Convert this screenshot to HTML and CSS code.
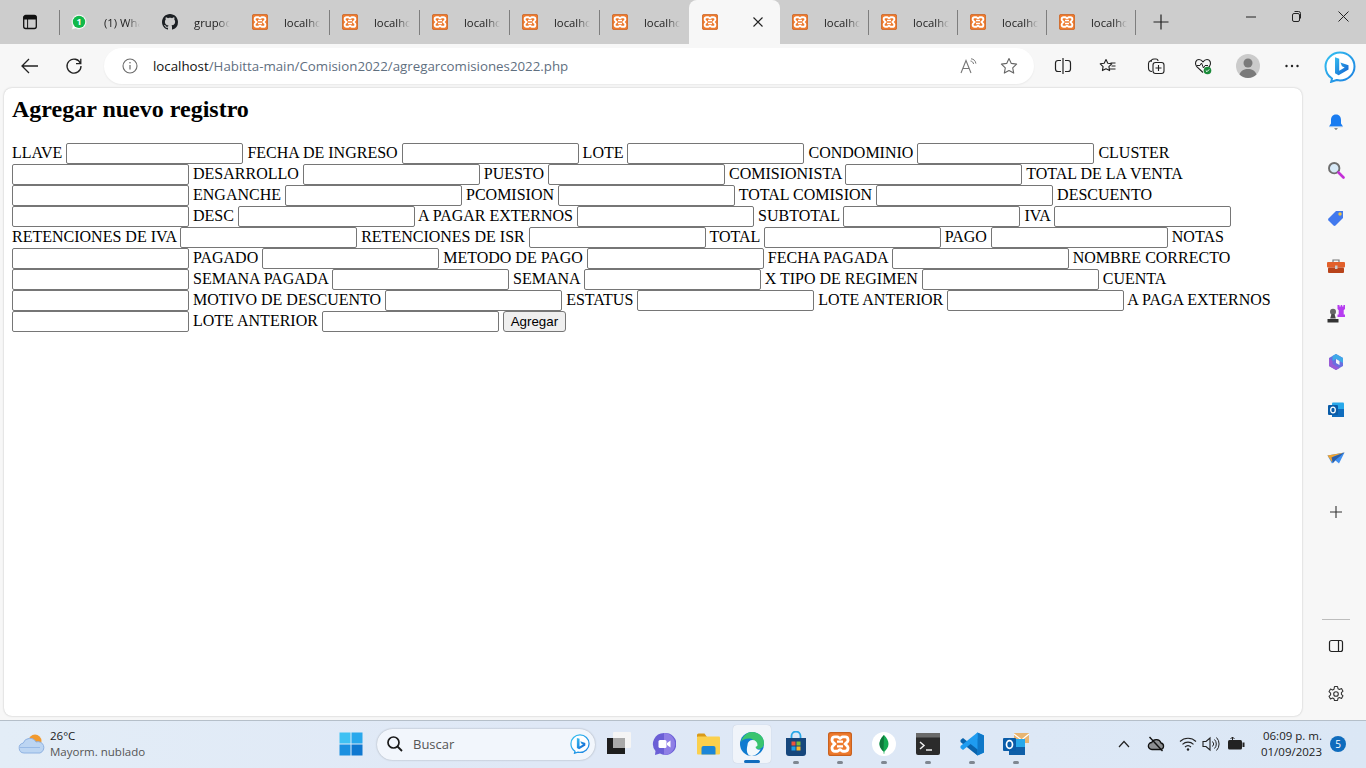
FILE: index.html
```html
<!DOCTYPE html>
<html lang="es">
<head>
<meta charset="utf-8">
<title>Agregar nuevo registro</title>
<link rel="stylesheet" href="styles.css">
</head>
<body>
<svg class="defs" width="0" height="0" aria-hidden="true">
  <defs>
    <symbol id="xampp" viewBox="0 0 16 16">
      <rect x=".4" y=".4" width="15.200" height="15.200" rx="1.500" fill="#ee7a2d" stroke="#c9611f" stroke-width=".8"/>
      <path d="M4.600 3.200h1.600c.9 0 1.200 1.100 1.800 1.100s.9-1.100 1.800-1.100h1.600c1.200 0 1.900.8 1.900 1.900v.5c0 1.200-1.300 1.600-1.900 2.400.6.800 1.900 1.200 1.900 2.400v.5c0 1.100-.7 1.900-1.900 1.900H9.800c-.9 0-1.200-1.100-1.800-1.100s-.9 1.100-1.800 1.100H4.600c-1.200 0-1.900-.8-1.900-1.900v-.5C2.700 9.200 4 8.800 4.600 8 4 7.200 2.700 6.800 2.700 5.600v-.5c0-1.100.7-1.900 1.900-1.900Z" fill="none" stroke="#fff" stroke-width="1.900"/>
      <path d="M6 6.400h4M6 9.600h4" stroke="#fff" stroke-width="1.500"/>
    </symbol>
    <symbol id="bing" viewBox="0 0 32 32">
      <path d="M16 1.500C8 1.500 1.500 8 1.500 15.500c0 5.500 2.700 9.500 6.500 12l-.8 3.300 5.300-1.800c1 .2 2.300.5 3.500.5 7.500 0 14.500-6 14.500-14S24 1.500 16 1.500Z" fill="#fff" stroke="url(#bingedge)" stroke-width="2"/>
      <path d="M11 6.200l4.200 1.500v12.100l5.500-3.200-2.700-1.300-1.600-3.900 8.100 2.800v4.300l-9.900 5.800L11 22.200Z" fill="url(#bingfill)"/>
    </symbol>
    <linearGradient id="bingedge" x1="0" y1="0" x2="1" y2="1"><stop offset="0" stop-color="#35c1f1"/><stop offset="1" stop-color="#1b7fe0"/></linearGradient>
    <linearGradient id="bingfill" x1="0" y1="0" x2="1" y2="1"><stop offset="0" stop-color="#37bdf0"/><stop offset="1" stop-color="#0f5fd0"/></linearGradient>
  </defs>
</svg>
<div class="app">
  <header class="tabstrip">
    <div class="winbtn">
      <svg width="16" height="16" viewBox="0 0 16 16"><rect x="1.700" y="1.500" width="12.600" height="13" rx="2" fill="none" stroke="#111" stroke-width="1.300"/><path d="M2 2.500h12v2.500H2zM5.600 5v9" fill="#111" stroke="#111" stroke-width="1"/></svg>
    </div>
    <div class="tab first noline">
      <svg class="fav" width="16" height="16" viewBox="0 0 16 16"><path d="M8 .5a7.400 7.400 0 0 0-6.300 11.200L.7 15.500l3.900-1A7.400 7.400 0 1 0 8 .5Z" fill="#fff" stroke="#d5d5d5" stroke-width=".6"/><circle cx="8" cy="7.900" r="6.200" fill="#12b84a"/><text class="wa" x="8" y="11">1</text></svg>
      <span class="tabtext">(1) WhatsApp</span>
    </div>
    <div class="tab noline">
      <svg class="fav" width="16" height="16" viewBox="0 0 16 16"><path fill="#1b1f23" fill-rule="evenodd" d="M8 0C3.580 0 0 3.580 0 8c0 3.540 2.290 6.530 5.470 7.590.4.070.55-.17.55-.38 0-.19-.01-.82-.01-1.490-2.010.37-2.530-.49-2.690-.94-.09-.23-.48-.94-.82-1.130-.28-.15-.68-.52-.01-.53.63-.01 1.080.58 1.230.82.720 1.210 1.870.87 2.330.66.070-.52.280-.87.510-1.070-1.780-.2-3.640-.89-3.640-3.950 0-.87.310-1.590.820-2.150-.08-.2-.36-1.020.08-2.120 0 0 .67-.21 2.200.82.640-.18 1.320-.27 2-.27s1.360.09 2 .27c1.530-1.040 2.200-.82 2.200-.82.440 1.100.16 1.920.08 2.120.51.560.82 1.270.82 2.150 0 3.070-1.870 3.750-3.650 3.950.29.25.54.73.54 1.480 0 1.070-.01 1.930-.01 2.200 0 .21.150.46.550.38A8.010 8.010 0 0 0 16 8c0-4.420-3.580-8-8-8Z"/></svg>
      <span class="tabtext">grupoduran</span>
    </div>
    <div class="tab"><svg class="fav" width="16" height="16"><use href="#xampp"/></svg><span class="tabtext">localhost</span></div>
    <div class="tab"><svg class="fav" width="16" height="16"><use href="#xampp"/></svg><span class="tabtext">localhost</span></div>
    <div class="tab"><svg class="fav" width="16" height="16"><use href="#xampp"/></svg><span class="tabtext">localhost</span></div>
    <div class="tab"><svg class="fav" width="16" height="16"><use href="#xampp"/></svg><span class="tabtext">localhost</span></div>
    <div class="tab noline tight"><svg class="fav" width="16" height="16"><use href="#xampp"/></svg><span class="tabtext">localhost</span></div>
    <div class="tab active">
      <svg class="fav" width="16" height="16"><use href="#xampp"/></svg>
      <svg class="tabclose" width="10" height="10" viewBox="0 0 10 10"><path d="M.5.500l9 9M9.500.500l-9 9" stroke="#222" stroke-width="1.100"/></svg>
    </div>
    <div class="tab tight"><svg class="fav" width="16" height="16"><use href="#xampp"/></svg><span class="tabtext">localhost</span></div>
    <div class="tab tight"><svg class="fav" width="16" height="16"><use href="#xampp"/></svg><span class="tabtext">localhost</span></div>
    <div class="tab tight"><svg class="fav" width="16" height="16"><use href="#xampp"/></svg><span class="tabtext">localhost</span></div>
    <div class="tab tight"><svg class="fav" width="16" height="16"><use href="#xampp"/></svg><span class="tabtext">localhost</span></div>
    <div class="newtab"><svg width="16" height="16" viewBox="0 0 16 16"><path d="M8 .5v15M.5 8h15" stroke="#222" stroke-width="1.200"/></svg></div>
    <div class="wincontrols">
      <svg width="46" height="44" viewBox="0 0 46 44"><path d="M18 17h10" stroke="#222" stroke-width="1"/></svg>
      <svg width="46" height="44" viewBox="0 0 46 44"><rect x="18.500" y="13.500" width="7" height="8" rx="1.500" fill="none" stroke="#222"/><path d="M20.500 11.500h4a2 2 0 0 1 2 2v5" fill="none" stroke="#222"/></svg>
      <svg width="46" height="44" viewBox="0 0 46 44"><path d="M18.500 11.500l10 10M28.500 11.500l-10 10" stroke="#222" stroke-width="1"/></svg>
    </div>
  </header>

  <nav class="toolbar">
    <button class="navbtn" aria-label="Atrás"><svg width="18" height="16" viewBox="0 0 18 16"><path d="M1 8h16M8 1 1 8l7 7" fill="none" stroke="#222" stroke-width="1.300"/></svg></button>
    <button class="navbtn" aria-label="Actualizar"><svg width="18" height="18" viewBox="0 0 18 18"><path d="M15.500 6.500A7 7 0 1 0 16 9M15.800 1.800v4.800H11" fill="none" stroke="#222" stroke-width="1.300"/></svg></button>
    <div class="address">
      <svg class="infoicon" width="16" height="16" viewBox="0 0 16 16"><circle cx="8" cy="8" r="7" fill="none" stroke="#6b6b6b" stroke-width="1.100"/><path d="M8 7v4.500" stroke="#6b6b6b" stroke-width="1.200"/><circle cx="8" cy="4.800" r=".8" fill="#6b6b6b"/></svg>
      <span class="url"><span class="host">localhost</span>/Habitta-main/Comision2022/agregarcomisiones2022.php</span>
      <svg class="readicon" width="18" height="16" viewBox="0 0 18 16"><path d="M1 15 6 2.500 11 15M2.800 10.500h6.400" fill="none" stroke="#777" stroke-width="1.100"/><path d="M10.500 3c1.800.3 2.700 1.300 3.100 3M11 .8c2.800.2 4.500 2 4.900 4.800" fill="none" stroke="#777"/></svg>
      <svg class="staricon" width="18" height="18" viewBox="0 0 18 18"><path d="m9 1.500 2.300 4.900 5.300.7-3.900 3.700 1 5.300L9 13.500l-4.700 2.600 1-5.300-3.900-3.700 5.300-.7Z" fill="none" stroke="#666" stroke-width="1.100" stroke-linejoin="round"/></svg>
    </div>
    <div class="tools">
      <svg width="18" height="18" viewBox="0 0 18 18"><path d="M7 3.500H4A2.500 2.500 0 0 0 1.500 6v6A2.500 2.500 0 0 0 4 14.500h3M11 3.500h3A2.500 2.500 0 0 1 16.500 6v6a2.500 2.500 0 0 1-2.500 2.500h-3M9 1v16" fill="none" stroke="#222" stroke-width="1.200"/></svg>
      <svg class="t-fav" width="18" height="18" viewBox="0 0 18 18"><path d="m7 2.500 1.800 3.700 4 .6-2.900 2.800.7 4L7 11.700l-3.600 1.900.7-4L1.200 6.800l4-.6Z" fill="none" stroke="#222" stroke-width="1.100" stroke-linejoin="round"/><path d="M11.500 6h5M12.500 9h4M10.500 12h6" stroke="#222" stroke-width="1.100"/></svg>
      <svg class="t-col" width="18" height="18" viewBox="0 0 18 18"><path d="M4 5a3 3 0 0 1 3-3h2a2 2 0 0 1 2 2" fill="none" stroke="#222" stroke-width="1.100"/><path d="M4 3.500C2.500 4 1.500 5 1.500 6.500V11c0 2 1 3.500 3.500 3.500" fill="none" stroke="#222" stroke-width="1.100"/><rect x="6" y="5.500" width="11" height="11" rx="2.500" fill="#f7f7f7" stroke="#222" stroke-width="1.100"/><path d="M11.500 8v6M8.500 11h6" stroke="#222" stroke-width="1.100"/></svg>
      <svg class="t-health" width="18" height="18" viewBox="0 0 18 18"><path d="M9 15.500 2.500 9.300C.5 7 1.500 2.500 5 2.500c2 0 3 1 4 2.300 1-1.300 2-2.300 4-2.300 3.500 0 4.500 4.500 2.500 6.800L14 11" fill="none" stroke="#222" stroke-width="1.100"/><path d="M2.500 8.500h3.500L7.500 6l2 5 1.500-2.500h3" fill="none" stroke="#222"/><circle cx="13.500" cy="13.500" r="3.800" fill="#1b8b3a"/><path d="m11.800 13.500 1.200 1.200 2.200-2.300" fill="none" stroke="#fff"/></svg>
      <svg class="t-avatar" width="24" height="24" viewBox="0 0 24 24"><circle cx="12" cy="12" r="12" fill="#cbcbcb"/><circle cx="12" cy="9" r="4.500" fill="#7a7a7a"/><path d="M3.500 20.500c1.500-4 4.500-5.500 8.500-5.500s7 1.500 8.500 5.500A12 12 0 0 1 12 24a12 12 0 0 1-8.500-3.500Z" fill="#7a7a7a"/></svg>
      <svg class="t-more" width="18" height="18" viewBox="0 0 18 18"><circle cx="3.500" cy="9" r="1.200" fill="#222"/><circle cx="9" cy="9" r="1.200" fill="#222"/><circle cx="14.500" cy="9" r="1.200" fill="#222"/></svg>
    </div>
    <svg class="bingbtn" width="32" height="32"><use href="#bing"/></svg>
  </nav>

  <div class="workspace">
    <main class="page">
      <h2 class="title">Agregar nuevo registro</h2>
      <form class="record">
        LLAVE <input class="field" type="text"> FECHA DE INGRESO <input class="field" type="text"> LOTE <input class="field" type="text"> CONDOMINIO <input class="field" type="text"> CLUSTER <input class="field" type="text"> DESARROLLO <input class="field" type="text"> PUESTO <input class="field" type="text"> COMISIONISTA <input class="field" type="text"> TOTAL DE LA VENTA <input class="field" type="text"> ENGANCHE <input class="field" type="text"> PCOMISION <input class="field" type="text"> TOTAL COMISION <input class="field" type="text"> DESCUENTO <input class="field" type="text"> DESC <input class="field" type="text"> A PAGAR EXTERNOS <input class="field" type="text"> SUBTOTAL <input class="field" type="text"> IVA <input class="field" type="text"> RETENCIONES DE IVA <input class="field" type="text"> RETENCIONES DE ISR <input class="field" type="text"> TOTAL <input class="field" type="text"> PAGO <input class="field" type="text"> NOTAS <input class="field" type="text"> PAGADO <input class="field" type="text"> METODO DE PAGO <input class="field" type="text"> FECHA PAGADA <input class="field" type="text"> NOMBRE CORRECTO <input class="field" type="text"> SEMANA PAGADA <input class="field" type="text"> SEMANA <input class="field" type="text"> X TIPO DE REGIMEN <input class="field" type="text"> CUENTA <input class="field" type="text"> MOTIVO DE DESCUENTO <input class="field" type="text"> ESTATUS <input class="field" type="text"> LOTE ANTERIOR <input class="field" type="text"> A PAGA EXTERNOS <input class="field" type="text"> LOTE ANTERIOR <input class="field" type="text"> <button class="submit" type="button">Agregar</button>
      </form>
    </main>
    <aside class="sidebar">
      <svg width="18" height="18" viewBox="0 0 18 18"><path d="M9 1.500c-3.500 0-5 2.700-5 5.500v3.500L2 13.500h14L14 10.500V7c0-2.800-1.500-5.500-5-5.500Z" fill="#1a7cf0"/><path d="M2.500 14.300h13" stroke="#e6e6e6" stroke-width=".8"/><path d="M7 15.200h4L9 17Z" fill="#666"/></svg>
      <svg width="18" height="18" viewBox="0 0 18 18"><circle cx="7.200" cy="7.200" r="5.200" fill="#d7e9f7" stroke="#6e6e6e" stroke-width="1.900"/><path d="m11.500 11.500 5 5" stroke="#c42fd8" stroke-width="2.600" stroke-linecap="round"/></svg>
      <svg width="18" height="18" viewBox="0 0 18 18"><path d="M9 2h7v7l-7.500 7.500a1.500 1.500 0 0 1-2 0l-5-5a1.500 1.500 0 0 1 0-2Z" fill="#4279ee"/><circle cx="13" cy="5" r="1.700" fill="#f3c63f"/></svg>
      <svg width="18" height="18" viewBox="0 0 18 18"><path d="M6 5V3h6v2" fill="none" stroke="#777" stroke-width="1.200"/><rect y="5" width="18" height="5.500" rx="1" fill="#e2602b"/><rect x="1" y="10.500" width="16" height="5.500" rx="1" fill="#b8431a"/><rect x="8" y="8.500" width="2.500" height="3.500" fill="#ccc"/></svg>
      <svg width="18" height="18" viewBox="0 0 18 18"><circle cx="6" cy="6.800" r="3" fill="#666"/><path d="M4.500 9h3l1.300 4.500H3.200Z" fill="#4a4a4a"/><path d="M.5 14h11v3.500H.5Z" fill="#333"/><path d="M10.500 0h2v1.500h1.200V0h1.500v1.500h1.200V0h1.600v4l-1.300 1.200V9.500H18v2.500h-7.500V9.500h1.200V5.200L10.500 4Z" fill="#b63cf0"/></svg>
      <svg width="18" height="18" viewBox="0 0 18 18"><path d="M9 1 16 5v8l-7 4-7-4V5Z" fill="#6a6fe0"/><path d="M9 1 16 5v5L9 6 5.500 8V3Z" fill="#3fa9e8"/><path d="M2 5v8l7 4 3.500-2-7-4V8Z" fill="#9a5cd6"/><path d="M9 6l3.500 2v4L9 10Z" fill="#f7f7f7"/></svg>
      <svg width="18" height="18" viewBox="0 0 18 18"><rect x="5" y="1.500" width="12" height="14" rx="1" fill="#28a8ea"/><rect x="5" y="8" width="12" height="8" fill="#0f6cbd"/><rect x="1" y="4" width="10" height="10" rx="1" fill="#0a5ca8"/><ellipse cx="6" cy="9" rx="2.300" ry="2.900" fill="none" stroke="#fff" stroke-width="1.300"/></svg>
      <svg width="18" height="18" viewBox="0 0 18 18"><path d="M.5 6.500 17.500 3.500l-5.500 11-3.500-3-3.500 3Z" fill="#3f8ff0"/><path d="M.5 6.500 17.500 3.500 6.500 7.500 5 13Z" fill="#f2a32e"/><path d="M4.500 8.500 17.500 3.500 8.500 11 6 14Z" fill="#2c5fa8"/></svg>
      <svg class="addicon" width="12" height="12" viewBox="0 0 12 12"><path d="M6 0v12M0 6h12" stroke="#333" stroke-width="1.100"/></svg>
      <div class="sideend">
        <div class="siderule"></div>
        <svg class="panelicon" width="16" height="14" viewBox="0 0 16 14"><rect x="1.500" y="1.500" width="13" height="11" rx="2" fill="none" stroke="#222" stroke-width="1.200"/><path d="M10.500 1.500v11" stroke="#222" stroke-width="1.200"/></svg>
        <svg width="18" height="18" viewBox="0 0 18 18"><path d="M7.500 1.500h3l.5 2.200 1.400.7 2.100-.8 1.500 2.600-1.600 1.500v1.600l1.600 1.500-1.500 2.600-2.100-.8-1.400.7-.5 2.200h-3L7 13.800l-1.400-.7-2.100.8L2 11.300l1.600-1.500V8.200L2 6.700l1.500-2.600 2.100.8L7 4.200Z" fill="none" stroke="#333" stroke-width="1.100" stroke-linejoin="round"/><circle cx="9" cy="9" r="2.300" fill="none" stroke="#333" stroke-width="1.100"/></svg>
      </div>
    </aside>
  </div>

  <footer class="taskbar">
    <div class="weather">
      <svg width="28" height="24" viewBox="0 0 28 24"><circle cx="18" cy="9" r="6.500" fill="#f29a2e"/><path d="M7 21a5 5 0 0 1-.8-9.900A7 7 0 0 1 19 10a5.500 5.500 0 0 1 4 11Z" fill="#bcd5f2" stroke="#8fb2e2" stroke-width="1"/><path d="M3 15.500h20" stroke="#8fb2e2" stroke-width=".8"/></svg>
      <div class="weathertext"><span class="temp">26°C</span><span class="sky">Mayorm. nublado</span></div>
    </div>
    <div class="center">
      <div class="slot"><svg width="24" height="24" viewBox="0 0 24 24"><rect x=".5" y=".5" width="11" height="11" fill="#3fc1f3"/><rect x="12.500" y=".5" width="11" height="11" fill="#29a8ec"/><rect x=".5" y="12.500" width="11" height="11" fill="#1b90e0"/><rect x="12.500" y="12.500" width="11" height="11" fill="#0f78d0"/></svg></div>
      <div class="search">
        <svg width="18" height="18" viewBox="0 0 18 18"><circle cx="7.500" cy="7.500" r="5.500" fill="none" stroke="#1a1a1a" stroke-width="1.700"/><path d="m11.500 11.500 4.500 4.500" stroke="#1a1a1a" stroke-width="1.800"/></svg>
        <span class="searchtext">Buscar</span>
        <svg class="searchbing" width="20" height="20"><use href="#bing"/></svg>
      </div>
      <div class="slot narrow"><svg width="24" height="24" viewBox="0 0 24 24"><rect x="6" y="0" width="18" height="16" rx="1" fill="#f5f5f5"/><rect x="0" y="6" width="18" height="16" fill="#1d1d1d"/><rect x="6" y="6" width="12" height="10" fill="#a9a9a9"/></svg></div>
      <div class="slot"><svg width="24" height="24" viewBox="0 0 24 24"><path d="M12 1a11 11 0 0 0-8.500 18L3 23l5-1.500A11 11 0 1 0 12 1Z" fill="#6b5fd6"/><path d="M12 1a11 11 0 0 1 0 22Z" fill="#8f7fe6"/><rect x="6.500" y="8" width="8" height="8" rx="1.500" fill="#fff"/><path d="m15 11 3.500-2.500v7L15 13Z" fill="#fff"/></svg></div>
      <div class="slot"><svg width="24" height="22" viewBox="0 0 24 22"><path d="M1 2a1.500 1.500 0 0 1 1.500-1.500h6L11 4H1Z" fill="#d99a1a"/><rect x="1" y="3.500" width="23" height="18" rx="1" fill="#fbd04d"/><path d="M5.500 21.500V15a2 2 0 0 1 2-2h10a2 2 0 0 1 2 2v6.500Z" fill="#1b86d8"/></svg></div>
      <div class="slot current"><svg width="26" height="26" viewBox="0 0 26 26"><circle cx="13" cy="13" r="12" fill="#0f7bd0"/><path d="M2 11C4 4 9 1 13 1c7 0 12 5 12 11 0 4-3 6-6 6-2.500 0-4-1-4-2.500 0-1 1-1.500 1-3 0-3-3-5-6-5-4 0-7 1.500-8 3.500Z" fill="#39c46f"/><path d="M8.500 14a5 5 0 0 1 10 0c0 1-1 1.500-2 2 .5 2 2.500 3 5 2.500A12 12 0 0 1 13 25c-5 0-6-5-4.500-11Z" fill="#f2f8fc"/></svg><span class="activebar"></span></div>
      <div class="slot"><svg width="22" height="26" viewBox="0 0 22 26"><path d="M6.500 7V5a4.500 4.500 0 0 1 9 0v2" fill="none" stroke="#29a8e8" stroke-width="1.800"/><path d="M1 7h20v15a3 3 0 0 1-3 3H4a3 3 0 0 1-3-3Z" fill="#16467c"/><rect x="6.500" y="10.500" width="4" height="4" fill="#f0533a"/><rect x="11.500" y="10.500" width="4" height="4" fill="#7fbd3c"/><rect x="6.500" y="15.500" width="4" height="4" fill="#1ea0e8"/><rect x="11.500" y="15.500" width="4" height="4" fill="#f8b92a"/></svg><span class="dot"></span></div>
      <div class="slot"><svg width="24" height="24"><use href="#xampp"/></svg><span class="dot"></span></div>
      <div class="slot"><svg width="24" height="24" viewBox="0 0 24 24"><circle cx="12" cy="12" r="12" fill="#fff"/><path d="M12 3c3 3 4.500 6 4.500 9 0 3.500-2.500 6-4 7.500l-.3 2.500h-.4l-.3-2.500c-1.500-1.500-4-4-4-7.500 0-3 1.500-6 4.500-9Z" fill="#13aa52"/><path d="M12 3c-3 3-4.500 6-4.500 9 0 3.500 2.500 6 4 7.500Z" fill="#0d7a3c"/></svg><span class="dot"></span></div>
      <div class="slot"><svg width="24" height="22" viewBox="0 0 24 22"><rect y="0" width="24" height="22" rx="2" fill="#2b2b2b"/><rect width="24" height="4.500" fill="#6a6a6a"/><path d="m4 9 4 3.500L4 16" fill="none" stroke="#eee" stroke-width="1.500"/><path d="M10 17h6" stroke="#eee" stroke-width="1.500"/></svg><span class="dot"></span></div>
      <div class="slot"><svg width="24" height="24" viewBox="0 0 24 24"><path d="M17.500.5 24 3.500v17l-6.500 3L7 13.500Z" fill="#1f9cf0"/><path d="M17.500.5v23L24 20.500v-17Z" fill="#0f78c8"/><path d="M.5 8 3 6l14.500 11.500v6L.5 10Z" fill="#0a64ad"/><path d="M.5 16 3 18 17.500 6.500V.5L.5 14Z" fill="#1f9cf0"/></svg><span class="dot"></span></div>
      <div class="slot"><svg width="28" height="24" viewBox="0 0 28 24"><rect x="12" y="1" width="15" height="10" fill="#e8b571"/><path d="m12 2 7.500 6L27 2" fill="none" stroke="#fff" stroke-width="1.200"/><rect x="7" y="7" width="16" height="16" fill="#28a8ea"/><rect x="7" y="15" width="16" height="8" fill="#0f5fa8"/><rect x="1" y="6" width="13" height="13" rx="1" fill="#0a5ca8"/><ellipse cx="7.500" cy="12.500" rx="3" ry="3.800" fill="none" stroke="#fff" stroke-width="1.700"/></svg><span class="dot"></span></div>
    </div>
    <div class="tray">
      <svg width="12" height="8" viewBox="0 0 12 8"><path d="m1 7 5-5.500L11 7" fill="none" stroke="#222" stroke-width="1.200"/></svg>
      <svg class="tr-cloud" width="18" height="16" viewBox="0 0 18 16"><path d="M5 13.500a3.500 3.500 0 0 1-.3-7A5 5 0 0 1 14 7a3.300 3.300 0 0 1-.5 6.500Z" fill="#8d8f92" stroke="#111" stroke-width="1.300"/><path d="m2.500 1 13 14" stroke="#111" stroke-width="1.400"/></svg>
      <svg class="tr-wifi" width="18" height="16" viewBox="0 0 18 16"><path d="M1 5.500a11.500 11.500 0 0 1 16 0M3.500 8.300a8 8 0 0 1 11 0M6 11a4.500 4.500 0 0 1 6 0" fill="none" stroke="#222" stroke-width="1.100"/><circle cx="9" cy="13.500" r="1.200" fill="#222"/></svg>
      <svg class="tr-vol" width="18" height="16" viewBox="0 0 18 16"><path d="M1 5.500h3L8 2v12l-4-3.500H1Z" fill="none" stroke="#222" stroke-width="1.100"/><path d="M10.500 5.500a3.500 3.500 0 0 1 0 5M12.500 3.500a6.500 6.500 0 0 1 0 9M14.500 1.500a9.500 9.500 0 0 1 0 13" fill="none" stroke="#222"/></svg>
      <svg class="tr-bat" width="18" height="16" viewBox="0 0 18 16"><rect x="1" y="4" width="14" height="9.500" rx="1.500" fill="#222"/><rect x="15.500" y="6.500" width="2" height="4.500" fill="#222"/><path d="M5.500 1v5M3.500 3l2-2 2 2" fill="none" stroke="#222"/></svg>
      <div class="clock"><span>06:09 p. m.</span><span>01/09/2023</span></div>
      <span class="badge">5</span>
    </div>
  </footer>
</div>
</body>
</html>
```
FILE: styles.css
```css
* { box-sizing: border-box; }
html, body { margin: 0; padding: 0; }
body { width: 1366px; height: 768px; overflow: hidden; background: #f7f7f7; font-family: "Open Sans", "Noto Sans", sans-serif; }
svg { display: block; flex: none; }
.defs { position: absolute; }
.app { display: flex; flex-direction: column; width: 1366px; height: 768px; }

.tabstrip { display: flex; align-items: stretch; height: 44px; flex: none; background: #cdcdcd; }
.winbtn { width: 60px; display: flex; align-items: center; padding-left: 22px; position: relative; }
.winbtn::after { content: ""; position: absolute; right: 0; top: 10px; height: 25px; width: 1px; background: #7e7e7e; }
.tab { width: 90px; display: flex; align-items: center; padding-left: 12px; gap: 16px; position: relative; }
.tab.first { padding-left: 11px; gap: 17px; }
.tab.tight { width: 89px; padding-left: 12px; }
.tab::after { content: ""; position: absolute; right: 0; top: 10px; height: 25px; width: 1px; background: #7e7e7e; }
.tab.noline::after, .tab.active::after { display: none; }
.tab.active { width: 91px; background: #f7f7f7; border-radius: 8px 8px 0 0; padding-left: 13px; gap: 0; }
.tabclose { margin-left: 35px; }
.tabtext { width: 36px; overflow: hidden; white-space: nowrap; font-size: 11.300px; color: #222; -webkit-mask-image: linear-gradient(90deg, #000 65%, transparent 100%); mask-image: linear-gradient(90deg, #000 65%, transparent 100%); }
.wa { font: bold 9px "Open Sans", sans-serif; fill: #fff; text-anchor: middle; }
.newtab { width: 50px; display: flex; align-items: center; justify-content: center; }
.wincontrols { margin-left: auto; display: flex; }

.toolbar { display: flex; align-items: center; height: 44px; flex: none; background: #f7f7f7; padding-left: 21px; }
.navbtn { width: 18px; height: 18px; padding: 0; border: 0; background: none; margin-right: 26px; display: flex; align-items: center; justify-content: center; }
.navbtn + .navbtn { margin-right: 21px; }
.address { width: 930px; height: 36px; border-radius: 18px; background: #fff; display: flex; align-items: center; padding-left: 18px; padding-right: 16px; box-shadow: 0 1px 2px rgba(0,0,0,.06); }
.url { font-size: 13.300px; color: #5f6f7f; margin-left: 15px; white-space: nowrap; }
.host { color: #111; }
.readicon { margin-left: auto; }
.staricon { margin-left: 22px; }
.tools { display: flex; align-items: center; margin-left: 20px; width: 270px; }
.t-fav { margin-left: 27px; }
.t-col { margin-left: 30px; }
.t-health { margin-left: 29px; }
.t-avatar { margin-left: 24px; }
.t-more { margin-left: 23px; }
.bingbtn { margin-top: 2px; }

.workspace { flex: 1; display: flex; min-height: 0; }
.page { width: 1298px; margin: 0 0 4px 4px; padding: 8px; background: #fff; border-radius: 8px; box-shadow: 0 0 2px rgba(0,0,0,.25); font-family: "Liberation Serif", "Times New Roman", serif; font-size: 16px; color: #000; }
.title { font-size: 24px; line-height: 27px; margin: 0 0 20px; font-weight: bold; }
.record { line-height: normal; }
.field { width: 177px; height: 21px; padding: 1px 2px; border: 1px solid #767676; border-radius: 2px; background: #fff; font: 13.333px "Liberation Sans", Arial, sans-serif; margin: 0; }
.submit { width: 63px; height: 21px; padding: 0; border: 1px solid #767676; border-radius: 3px; background: #efefef; font: 13.333px "Liberation Sans", Arial, sans-serif; color: #000; margin: 0; }

.sidebar { width: 64px; display: flex; flex-direction: column; align-items: center; padding: 25px 0 0 4px; gap: 30px; }
.addicon { margin-top: 9px; }
.sideend { margin-top: auto; margin-bottom: 17px; display: flex; flex-direction: column; align-items: center; }
.siderule { width: 28px; height: 1px; background: #bdbdbd; margin-bottom: 19px; }
.panelicon { margin-bottom: 32px; }

.taskbar { height: 48px; flex: none; display: flex; align-items: center; padding-bottom: 1px; background: linear-gradient(90deg, #e3edf7, #dfe8f6 40%, #dde8f6 75%, #dbe7f5); border-top: 1px solid #b5bfc9; }
.weather { width: 329px; display: flex; align-items: center; padding-left: 17px; gap: 5px; }
.weathertext { display: flex; flex-direction: column; font-size: 11.500px; line-height: 16px; }
.temp { color: #1a1a1a; }
.sky { color: #555; }
.center { display: flex; align-items: center; }
.slot { width: 44px; height: 38px; display: flex; align-items: center; justify-content: center; position: relative; border-radius: 4px; }
.slot.narrow { width: 46px; margin-left: 1px; }
.slot.current { background: #f0f4fa; box-shadow: 0 0 1px rgba(0,0,0,.2); width: 38px; margin: 0 3px; }
.activebar { position: absolute; bottom: 0; left: 11px; width: 16px; height: 3px; border-radius: 2px; background: #0f6cbd; }
.dot { position: absolute; bottom: -1px; left: 19px; width: 6px; height: 3px; border-radius: 2px; background: #7f8791; }
.search { width: 218px; height: 31px; margin-left: 4px; border-radius: 16px; background: #f2f6fc; box-shadow: 0 0 2px rgba(0,0,0,.3); display: flex; align-items: center; padding: 0 5px 0 9px; }
.searchtext { font-size: 13px; color: #555; margin-left: 9px; }
.searchbing { margin-left: auto; }
.tray { margin-left: auto; display: flex; align-items: center; padding-right: 20px; }
.tr-cloud { margin-left: 17px; }
.tr-wifi { margin-left: 14px; }
.tr-vol { margin-left: 5px; }
.tr-bat { margin-left: 7px; }
.clock { display: flex; flex-direction: column; align-items: flex-end; width: 77px; font-size: 11.500px; line-height: 16px; color: #222; }
.badge { width: 16px; height: 16px; border-radius: 50%; background: #0f6cbd; color: #fff; font-size: 10px; line-height: 16px; text-align: center; margin-left: 8px; }
```
